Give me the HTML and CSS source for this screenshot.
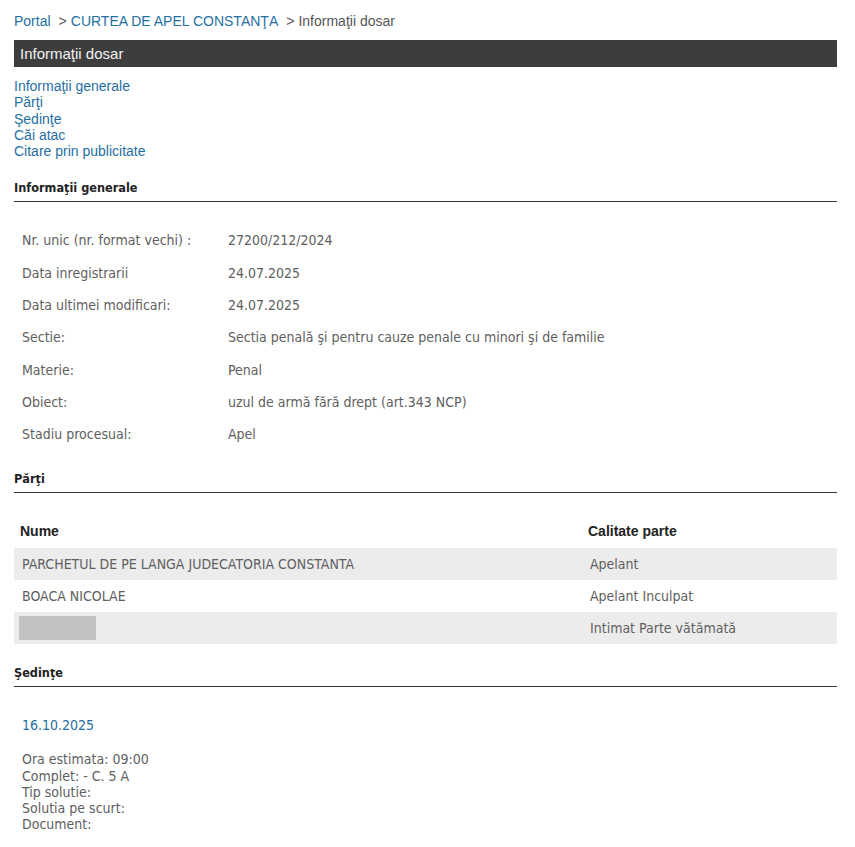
FILE: index.html
```html
<!DOCTYPE html>
<html lang="ro">
<head>
<meta charset="utf-8">
<title>Informaţii dosar</title>
<link rel="stylesheet" href="styles.css">
</head>
<body>
<div class="page">
  <div class="crumbs"><a href="#">Portal</a><span class="sep">&gt;</span><a href="#">CURTEA DE APEL CONSTANŢA</a><span class="sep">&gt;</span><span class="current">Informaţii dosar</span></div>
  <div class="bar">Informaţii dosar</div>
  <ul class="toc">
    <li><a href="#">Informaţii generale</a></li>
    <li><a href="#">Părţi</a></li>
    <li><a href="#">Şedinţe</a></li>
    <li><a href="#">Căi atac</a></li>
    <li><a href="#">Citare prin publicitate</a></li>
  </ul>

  <h2 class="sec sec-first">Informaţii generale</h2>
  <table class="info">
    <tr><td class="lbl">Nr. unic (nr. format vechi) :</td><td>27200/212/2024</td></tr>
    <tr><td class="lbl">Data inregistrarii</td><td>24.07.2025</td></tr>
    <tr><td class="lbl">Data ultimei modificari:</td><td>24.07.2025</td></tr>
    <tr><td class="lbl">Sectie:</td><td>Sectia penală şi pentru cauze penale cu minori şi de familie</td></tr>
    <tr><td class="lbl">Materie:</td><td>Penal</td></tr>
    <tr><td class="lbl">Obiect:</td><td>uzul de armă fără drept (art.343 NCP)</td></tr>
    <tr><td class="lbl">Stadiu procesual:</td><td>Apel</td></tr>
  </table>

  <h2 class="sec sec-parti">Părţi</h2>
  <table class="parti">
    <colgroup><col class="col-nume"><col class="col-cal"></colgroup>
    <thead><tr><th>Nume</th><th>Calitate parte</th></tr></thead>
    <tbody>
      <tr class="odd"><td>PARCHETUL DE PE LANGA JUDECATORIA CONSTANTA</td><td>Apelant</td></tr>
      <tr><td>BOACA NICOLAE</td><td>Apelant Inculpat</td></tr>
      <tr class="odd"><td><span class="redact"></span></td><td>Intimat Parte vătămată</td></tr>
    </tbody>
  </table>

  <h2 class="sec sec-sed">Şedinţe</h2>
  <div class="sedinta">
    <div class="date">16.10.2025</div>
    <div class="det">Ora estimata: 09:00<br>Complet: - C. 5 A<br>Tip solutie:<br>Solutia pe scurt:<br>Document:</div>
  </div>
</div>
</body>
</html>
```

FILE: styles.css
```css
html, body {
  margin: 0;
  padding: 0;
  background: #ffffff;
}
.page {
  width: 823px;
  padding: 13px 0 0 14px;
  font-family: "Liberation Sans", Arial, sans-serif;
  font-size: 14px;
  color: #555;
}
a {
  color: #1f6fa3;
  text-decoration: none;
}
.crumbs {
  line-height: 16px;
  font-size: 14px;
}
.crumbs .sep {
  color: #555;
  margin: 0 4px 0 8px;
}
.crumbs .current {
  color: #555;
}
.bar {
  margin-top: 11px;
  height: 27px;
  line-height: 27px;
  background: #3d3d3d;
  color: #f2f2f2;
  font-size: 15px;
  padding-left: 6px;
}
.toc {
  list-style: none;
  margin: 11px 0 0 0;
  padding: 0;
  font-size: 14px;
  line-height: 16.25px;
}
.sec {
  margin: 0;
  font-family: "DejaVu Sans Condensed", "DejaVu Sans", sans-serif;
  font-weight: bold;
  font-size: 12.6px;
  color: #222;
  line-height: 17px;
  border-bottom: 1px solid #333;
  padding-bottom: 5px;
}
.sec-first {
  margin-top: 20px;
}
.info {
  border-collapse: collapse;
  margin-top: 22px;
  font-family: "DejaVu Sans Condensed", "DejaVu Sans", sans-serif;
  font-size: 14px;
  color: #606060;
}
.info td {
  height: 32.3px;
  padding: 0 0 0 8px;
  vertical-align: middle;
}
.info td.lbl {
  width: 198px;
}
.sec-parti {
  margin-top: 20px;
}
.parti {
  width: 823px;
  table-layout: fixed;
  border-collapse: collapse;
  margin-top: 21px;
  font-family: "DejaVu Sans Condensed", "DejaVu Sans", sans-serif;
  font-size: 14px;
  color: #606060;
}
.col-nume {
  width: 568px;
}
.col-cal {
  width: 255px;
}
.parti th {
  font-family: "Liberation Sans", Arial, sans-serif;
  font-weight: bold;
  font-size: 14px;
  color: #222;
  text-align: left;
  height: 34px;
  padding: 0 0 0 6px;
  vertical-align: middle;
}
.parti td {
  height: 32px;
  padding: 0 0 0 8px;
  vertical-align: middle;
  white-space: nowrap;
}
.parti tr.odd td {
  background: #ececec;
}
.redact {
  display: inline-block;
  width: 77px;
  height: 24px;
  background: #c2c2c2;
  vertical-align: middle;
  margin-left: -3px;
}
.sec-sed {
  margin-top: 20px;
}
.sedinta {
  padding-left: 8px;
  font-family: "DejaVu Sans Condensed", "DejaVu Sans", sans-serif;
  font-size: 14px;
  color: #606060;
}
.date {
  margin-top: 29px;
  color: #1f6fa3;
  font-size: 14px;
  line-height: 18px;
}
.det {
  margin-top: 17px;
  line-height: 16.25px;
}
```
